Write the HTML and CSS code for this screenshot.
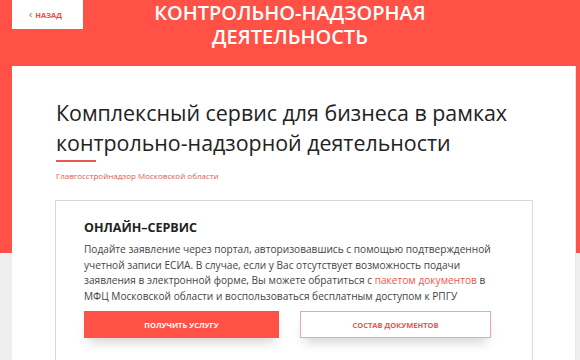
FILE: index.html
```html
<!DOCTYPE html>
<html lang="ru">
<head>
<meta charset="utf-8">
<link rel="stylesheet" href="styles.css">
</head>
<body>
<div class="page">
  <header class="top">
    <a class="back" href="#"><span class="chev">‹</span>НАЗАД</a>
    <h1 class="title"><span class="tline">КОНТРОЛЬНО-НАДЗОРНАЯ</span><span class="tline">ДЕЯТЕЛЬНОСТЬ</span></h1>
  </header>
  <main class="card">
    <h2 class="heading">Комплексный сервис для бизнеса в рамках контрольно-надзорной деятельности</h2>
    <div class="rule"></div>
    <div class="org">Главгосстройнадзор Московской области</div>
    <section class="box">
      <h3 class="box-title">ОНЛАЙН–СЕРВИС</h3>
      <p class="box-text">Подайте заявление через портал, авторизовавшись с помощью подтвержденной<br>учетной записи ЕСИА. В случае, если у Вас отсутствует возможность подачи<br>заявления в электронной форме, Вы можете обратиться с <a href="#">пакетом документов</a> в<br>МФЦ Московской области и воспользоваться бесплатным доступом к РПГУ</p>
      <div class="actions">
        <a class="btn btn-primary" href="#">ПОЛУЧИТЬ УСЛУГУ</a>
        <a class="btn btn-outline" href="#">СОСТАВ ДОКУМЕНТОВ</a>
      </div>
    </section>
  </main>
</div>
</body>
</html>
```
FILE: styles.css
```css
* { box-sizing: border-box; }
html, body { margin: 0; padding: 0; }
body {
  font-family: "Open Sans", "Liberation Sans", sans-serif;
  background: #efefef;
  width: 580px;
  height: 360px;
  overflow: hidden;
}
.page {
  background: linear-gradient(#ff5145 0, #ff5145 253px, #efefef 253px);
  height: 360px;
  overflow: hidden;
}
.top {
  height: 66px;
  display: flex;
  align-items: flex-start;
  position: relative;
}
.back {
  position: absolute;
  left: 12px;
  top: 0;
  width: 71px;
  height: 29px;
  background: #fff;
  color: #ef4a40;
  font-size: 7.5px;
  font-weight: 700;
  text-decoration: none;
  display: flex;
  align-items: center;
  justify-content: center;
  gap: 3px;
  padding-right: 4px;
}
.chev { font-size: 11px; font-weight: 400; line-height: 1; margin-top: -2px; }
.title {
  flex: 1;
  margin: 0;
  padding-top: 1px;
  display: flex;
  flex-direction: column;
  align-items: center;
  color: #fff;
  font-size: 20px;
  font-weight: 600;
  line-height: 24px;
}
.tline { display: block; }
.card {
  margin-left: 12px;
  width: 564px;
  background: #fff;
  padding: 32px 0 0 44px;
  height: 294px;
  border-right: 1px solid #e6e6e6;
}
.heading {
  margin: 0;
  font-size: 21.4px;
  font-weight: 400;
  line-height: 30px;
  color: #222;
  width: 480px;
}
.rule {
  width: 40px;
  height: 2px;
  background: #e8584e;
  margin-top: 2px;
}
.org {
  margin-top: 8px;
  font-size: 8px;
  line-height: 11px;
  color: #e05a52;
}
.box {
  margin-top: 19px;
  width: 478px;
  margin-left: -1px;
  border: 1px solid #d9d9d9;
  border-bottom: none;
  padding: 19px 10px 0 28px;
  height: 160px;
}
.box-title {
  margin: 0;
  font-size: 12.5px;
  font-weight: 700;
  color: #222;
  line-height: 16px;
}
.box-text {
  margin: 6px 0 0;
  font-size: 10.15px;
  line-height: 15.5px;
  color: #444;
  white-space: nowrap;
}
.box-text a { color: #f0554c; text-decoration: none; }
.actions {
  display: flex;
  gap: 21px;
  margin-top: 7px;
}
.btn {
  height: 27px;
  display: flex;
  align-items: center;
  justify-content: center;
  font-size: 7.5px;
  font-weight: 700;
  text-decoration: none;
  box-shadow: 0 8px 12px -4px rgba(0,0,0,0.18);
}
.btn-primary {
  width: 195px;
  background: #ff5145;
  color: #fff;
}
.btn-outline {
  width: 191px;
  border: 1px solid #e9a8a4;
  color: #e5574e;
  background: #fff;
}
```
